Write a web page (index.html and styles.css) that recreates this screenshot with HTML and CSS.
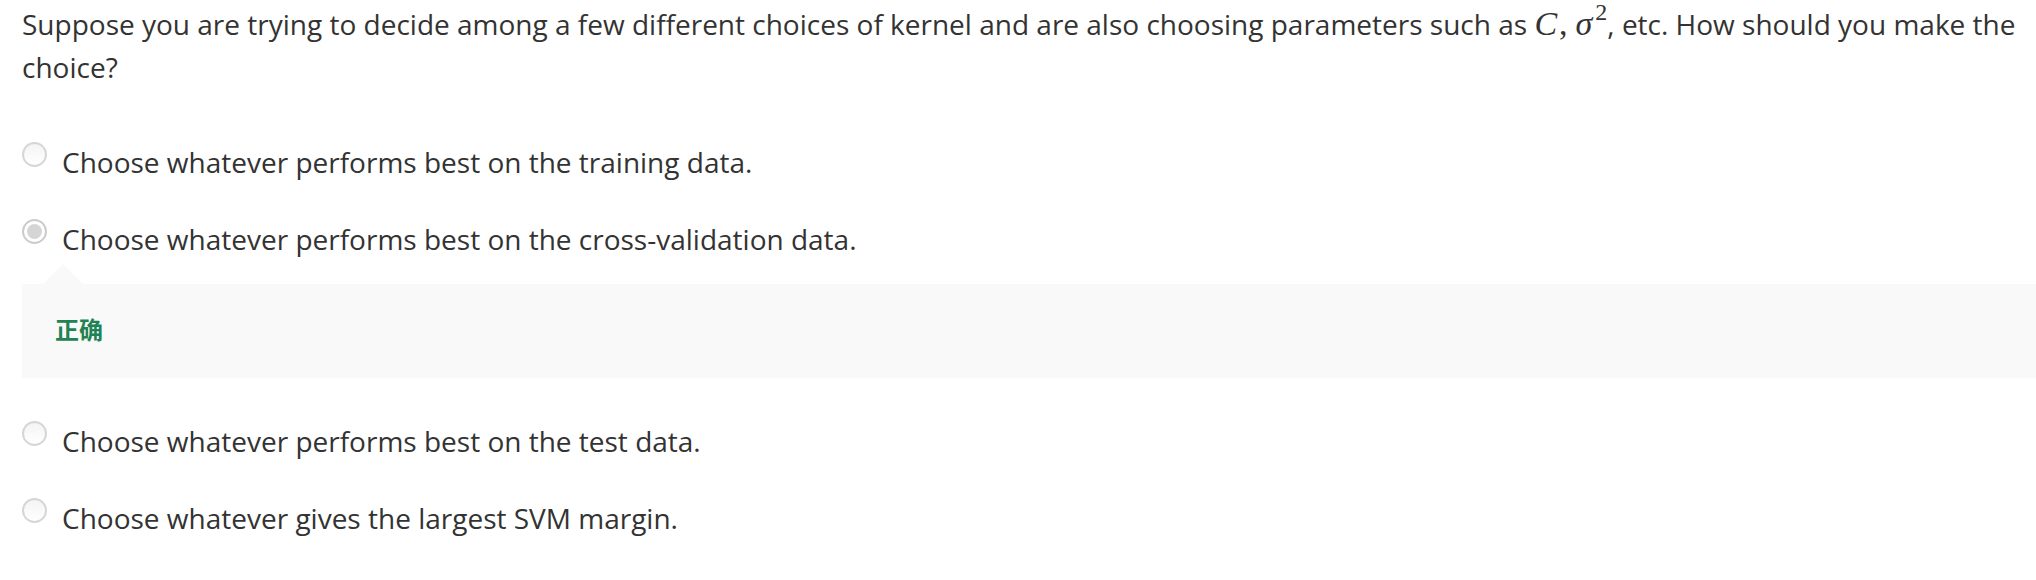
FILE: index.html
```html
<!DOCTYPE html>
<html lang="en">
<head>
<meta charset="utf-8">
<title>Quiz question</title>
<link rel="stylesheet" href="styles.css">
</head>
<body>
<div class="quiz">
  <div class="question">Suppose you are trying to decide among a few different choices of kernel and are also choosing parameters such as <span class="math"><span class="mi">C</span><span class="mo">,</span><span class="mi sigma">σ</span><sup class="msup">2</sup></span>, etc. How should you make the choice?</div>
  <div class="options">
    <div class="option">
      <span class="radio"></span>
      <span class="label">Choose whatever performs best on the training data.</span>
    </div>
    <div class="option">
      <span class="radio checked"></span>
      <span class="label">Choose whatever performs best on the cross-validation data.</span>
    </div>
    <div class="feedback">
      <span class="correct">正确</span>
    </div>
    <div class="option">
      <span class="radio"></span>
      <span class="label">Choose whatever performs best on the test data.</span>
    </div>
    <div class="option">
      <span class="radio"></span>
      <span class="label">Choose whatever gives the largest SVM margin.</span>
    </div>
  </div>
</div>
</body>
</html>
```
FILE: styles.css
```css
html, body {
  margin: 0;
  padding: 0;
  background: #ffffff;
}

body {
  font-family: "Open Sans", "Noto Sans", "Noto Sans CJK SC", sans-serif;
  color: #333333;
}

.quiz {
  padding: 3px 15px 0 22px;
}

.question {
  font-size: 28px;
  line-height: 43px;
}

.math {
  font-family: "Liberation Serif", "DejaVu Serif", serif;
  font-size: 34px;
  line-height: 0;
}

.mi {
  font-style: italic;
}

.mo {
  font-style: normal;
  margin-left: 2px;
}

.sigma {
  margin-left: 8px;
}

.msup {
  font-size: 24px;
  line-height: 0;
  vertical-align: 15px;
  margin-left: 3px;
  margin-right: 0;
}

.options {
  display: flex;
  flex-direction: column;
  margin-top: 54px;
}

.option {
  display: flex;
  align-items: flex-start;
  gap: 15px;
  margin-bottom: 39px;
}

.option:last-child {
  margin-bottom: 0;
}

.radio {
  flex: 0 0 auto;
  box-sizing: border-box;
  width: 25px;
  height: 25px;
  margin-top: -1px;
  border: 2px solid #d6d6d6;
  border-radius: 50%;
  background: linear-gradient(#f4f4f4, #ffffff);
  display: flex;
  align-items: center;
  justify-content: center;
}

.radio.checked {
  border-color: #cccccc;
  background: #ffffff;
}

.radio.checked::after {
  content: "";
  width: 15px;
  height: 15px;
  border-radius: 50%;
  background: #d5d5d5;
}

.label {
  font-size: 28px;
  line-height: 38px;
}

.feedback {
  position: relative;
  margin-top: -13px;
  margin-bottom: 44px;
  margin-right: -15px;
  background: #f9f9f9;
  padding: 28px 33px 32px;
}

.feedback::before {
  content: "";
  position: absolute;
  left: 21px;
  top: -20px;
  border-left: 20px solid transparent;
  border-right: 20px solid transparent;
  border-bottom: 20px solid #f9f9f9;
}

.correct {
  display: block;
  font-family: "Noto Sans CJK SC", "Noto Sans", sans-serif;
  font-size: 24px;
  line-height: 34px;
  font-weight: 700;
  color: #1f8354;
}
```
